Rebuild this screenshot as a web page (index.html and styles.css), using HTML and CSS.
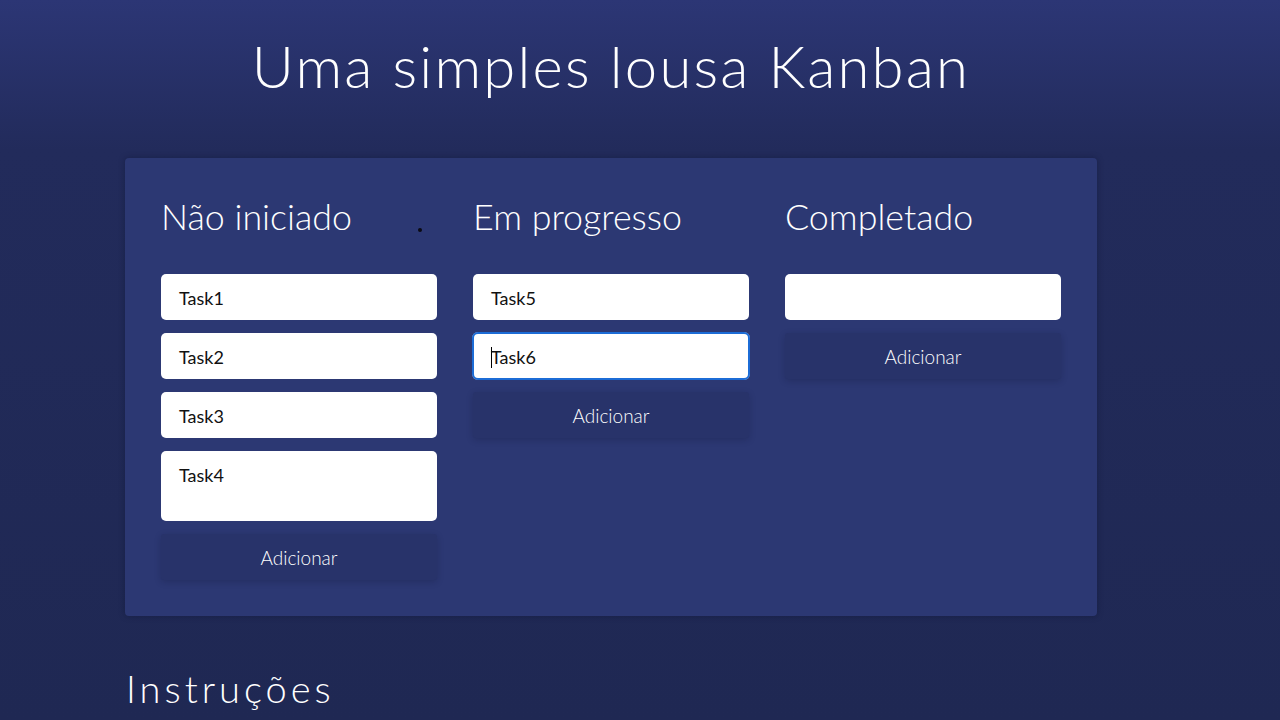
FILE: index.html
```html
<!DOCTYPE html>
<html lang="pt">
<head>
<meta charset="utf-8">
<title>Kanban</title>
<link rel="stylesheet" href="styles.css">
</head>
<body>
<main class="page">
  <h1 class="title">Uma simples lousa Kanban</h1>
  <section class="board">
    <span class="dot"></span>
    <div class="column">
      <h2 class="col-title">Não iniciado</h2>
      <div class="cards">
        <div class="card">Task1</div>
        <div class="card">Task2</div>
        <div class="card">Task3</div>
        <div class="card tall">Task4</div>
      </div>
      <button class="add">Adicionar</button>
    </div>
    <div class="column">
      <h2 class="col-title">Em progresso</h2>
      <div class="cards">
        <div class="card">Task5</div>
        <div class="card focused"><span class="caret"></span>Task6</div>
      </div>
      <button class="add">Adicionar</button>
    </div>
    <div class="column">
      <h2 class="col-title">Completado</h2>
      <div class="cards">
        <div class="card"></div>
      </div>
      <button class="add">Adicionar</button>
    </div>
  </section>
  <h2 class="instructions">Instruções</h2>
</main>
</body>
</html>
```
FILE: styles.css
```css
html, body {
  margin: 0;
  padding: 0;
  height: 100%;
}
body {
  background: linear-gradient(180deg, #2c3675 0px, #222b5b 150px, #1f2853 100%);
  font-family: "Lato", "Open Sans", sans-serif;
  color: #fff;
  overflow: hidden;
}
.page {
  width: 972px;
  margin: 0 0 0 125px;
  padding-top: 31px;
}
.title {
  margin: 0;
  font-size: 58px;
  font-weight: 300;
  line-height: 1.2;
  text-align: center;
  letter-spacing: 2.2px;
}
.board {
  position: relative;
  margin-top: 57px;
  background: #2c3873;
  border-radius: 4px;
  box-shadow: 0 0 6px rgba(10, 15, 40, 0.35);
  padding: 36px;
  display: grid;
  grid-template-columns: repeat(3, 276px);
  column-gap: 36px;
  align-items: start;
}
.dot {
  position: absolute;
  left: 293px;
  top: 70px;
  width: 4px;
  height: 4px;
  border-radius: 50%;
  background: #0a0a14;
}
.column {
  display: flex;
  flex-direction: column;
}
.col-title {
  margin: 0 0 36px 0;
  font-size: 35.8px;
  font-weight: 300;
  line-height: 43px;
  padding-top: 1px;
}
.cards {
  display: flex;
  flex-direction: column;
  gap: 13px;
}
.card {
  box-sizing: border-box;
  height: 46px;
  background: #fff;
  color: #111;
  border-radius: 5px;
  padding: 13px 18px 0;
  font-size: 18px;
  line-height: 22px;
  font-weight: 400;
}
.card.tall {
  height: 70px;
}
.card.focused {
  outline: 2px solid #1c6cd6;
  outline-offset: -1px;
  box-shadow: 0 0 0 1px rgba(255, 255, 255, 0.6);
}
.caret {
  display: inline-block;
  width: 1px;
  height: 21px;
  background: #000;
  vertical-align: -4px;
  margin-right: -1px;
}
.add {
  margin-top: 13px;
  box-sizing: border-box;
  height: 46px;
  border: none;
  border-radius: 3px;
  background: #28336a;
  box-shadow: 0 2px 6px rgba(15, 20, 50, 0.25);
  color: #fff;
  font-family: "Lato", "Open Sans", sans-serif;
  font-size: 19px;
  font-weight: 300;
  padding: 2px 0 0;
}
.instructions {
  margin: 50px 0 0 1px;
  font-size: 38px;
  font-weight: 300;
  line-height: 1.2;
  letter-spacing: 4px;
}
```
